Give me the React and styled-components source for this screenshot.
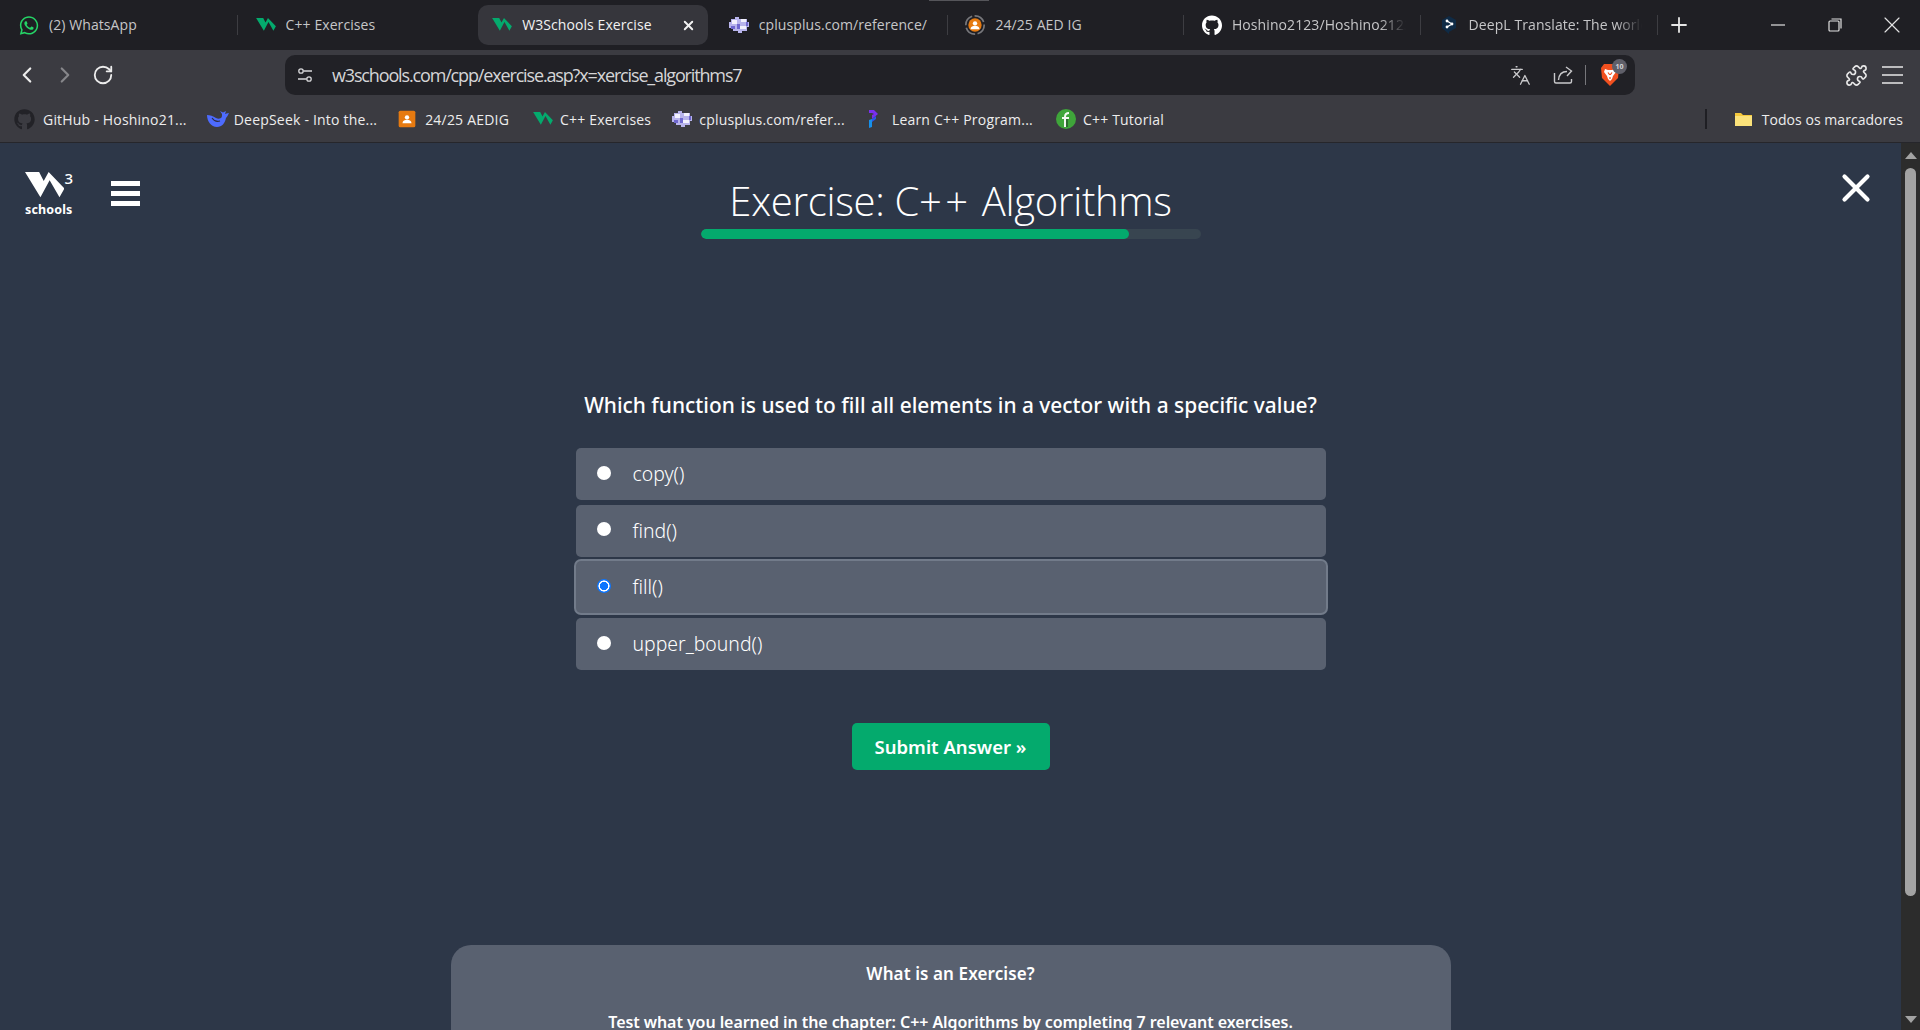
import React from "react";
import styled, { createGlobalStyle } from "styled-components";
import { FaGithub, FaWhatsapp } from "react-icons/fa";
import { ChevronLeft, ChevronRight, RotateCw, Languages, Puzzle, Plus, X } from "lucide-react";

const Global = createGlobalStyle`
  html, body { margin: 0; padding: 0; height: 100%; overflow: hidden; background: #2d3748; }
  * { box-sizing: border-box; }
`;

const ui = `"Open Sans", "Noto Sans", sans-serif`;
const pageFont = `"Noto Sans", "Open Sans", sans-serif`;

const Shell = styled.div`
  width: 1920px; height: 1030px; display: flex; flex-direction: column; overflow: hidden;
`;
const TabStrip = styled.div`
  position: relative; height: 50px; flex: none; background: #1f1f24; display: flex; padding-left: 1.5px;
  font-family: ${ui};
  &::before { content: ""; position: absolute; left: 929px; top: 0; width: 60px; height: 1px; background: #55555a; }
`;
const Tab = styled.div`
  position: relative; width: 236.6px; flex: none; padding: 5px 3.5px;
  &::after {
    content: ""; display: ${p => (p.$sep ? "block" : "none")};
    position: absolute; right: 0; top: 15px; width: 1px; height: 20px; background: #3d3d42;
  }
`;
const TabPill = styled.div`
  height: 40px; border-radius: 10px; display: flex; align-items: center; gap: 10px; padding: 0 12px 0 14px;
  background: ${p => (p.$active ? "#36363c" : "transparent")};
  color: ${p => (p.$active ? "#f2f2f2" : "#c6c6c8")};
`;
const TabTitle = styled.span`
  flex: 1; min-width: 0; white-space: nowrap; overflow: hidden; font-size: 14px; letter-spacing: 0.08px; margin-bottom: 2px;
  mask-image: ${p => (p.$fade ? "linear-gradient(90deg,#000 85%,transparent)" : "none")};
`;
const IconSlot = styled.span`
  width: 20px; height: 20px; flex: none; display: flex; align-items: center; justify-content: center;
`;
const NewTab = styled.div`
  width: 42px; display: flex; align-items: center; justify-content: center; color: #e6e6e6;
`;
const WindowControls = styled.div`
  margin-left: auto; display: flex; align-items: center; color: #e2e2e2; padding-right: 0;
`;
const WindowButton = styled.div`
  width: 57px; display: flex; justify-content: center; align-items: center;
`;
const Toolbar = styled.div`
  height: 50px; flex: none; background: #3b3b41; display: flex; align-items: center; padding: 0 17px 0 8px; color: #e8e8e8;
`;
const NavButton = styled.div`
  width: 38px; display: flex; justify-content: center; color: ${p => (p.$dim ? "#86868a" : "#ececec")};
`;
const AddressBar = styled.div`
  width: 1350px; height: 40px; margin-left: 163px; background: #212126; border-radius: 10px;
  display: flex; align-items: center; padding: 0 12px 0 12px; font-family: ${ui}; color: #d5d5d7;
`;
const Url = styled.span`
  margin-left: 19px; font-size: 18px; letter-spacing: -1.15px; white-space: nowrap; flex: 1;
`;
const AddressIcon = styled.span`
  display: flex; margin-left: ${p => p.$gap || 0}px; color: #c9c9cb;
`;
const VerticalRule = styled.span`
  width: 1px; height: 20px; background: #77777b; margin: 0 14px 0 12px;
`;
const BraveWrap = styled.span`
  position: relative; display: flex; margin-right: 3px;
`;
const CountBadge = styled.span`
  position: absolute; left: 12px; top: -4px; width: 15px; height: 15px; border-radius: 50%;
  background: #5f5f69; color: #d4d4d8; font: 700 7px/15px ${ui}; text-align: center;
`;
const ToolbarRight = styled.div`
  margin-left: auto; display: flex; align-items: center; gap: 14px;
`;
const BookmarkBar = styled.div`
  height: 43px; flex: none; background: #3b3b41; border-bottom: 1px solid #26262b; padding: 0 17px 4px 14px;
  display: flex; align-items: center; font-family: ${ui}; color: #ededed; font-size: 14px; letter-spacing: 0.2px;
`;
const Bookmark = styled.div`
  display: flex; align-items: center; gap: ${p => p.$gap || 8}px; margin-right: ${p => p.$end || 20}px; white-space: nowrap;
`;
const AllBookmarks = styled.div`
  margin-left: auto; display: flex; align-items: center; gap: 9px; white-space: nowrap; letter-spacing: 0.05px;
`;
const BarDivider = styled.span`
  width: 2px; height: 20px; background: #1f1f24; margin-right: 18px;
`;
const Viewport = styled.div`
  flex: 1; min-height: 0; display: flex;
`;
const Page = styled.main`
  flex: 1; min-width: 0; background: #2d3748; color: #fff; font-family: ${pageFont}; overflow: hidden; position: relative;
`;
const Header = styled.header`
  display: grid; grid-template-columns: 1fr 500px 1fr; padding-top: 33px;
`;
const LeftHead = styled.div`
  display: flex; align-items: flex-start; padding-left: 25px; margin-top: -4px;
`;
const Logo = styled.div`
  width: 48px; display: flex; flex-direction: column;
`;
const LogoTop = styled.div`
  display: flex; align-items: flex-start;
`;
const LogoThree = styled.span`
  font: 500 15px/12px ${pageFont};
`;
const LogoWord = styled.span`
  font: 700 12.5px/13px ${pageFont}; letter-spacing: 0.15px; margin-top: 5px;
`;
const Burger = styled.div`
  width: 29px; margin-left: 38px; margin-top: 9px; display: flex; flex-direction: column; gap: 5px;
`;
const BurgerBar = styled.span`
  height: 5px; background: #fff; display: block;
`;
const Center = styled.div`
  display: flex; flex-direction: column; align-items: center;
`;
const Title = styled.h1`
  margin: 0; font-size: 40px; font-weight: 300; line-height: 50px; white-space: nowrap; font-family: "Open Sans", sans-serif;
  letter-spacing: -0.3px;
`;
const TitlePlus = styled.span`
  letter-spacing: 3.5px;
`;
const ProgressTrack = styled.div`
  width: 500px; height: 10px; margin-top: 3px; border-radius: 5px; background: #384550; overflow: hidden;
`;
const ProgressFill = styled.div`
  height: 100%; background: #04aa6d; border-radius: 5px;
`;
const CloseCell = styled.div`
  display: flex; justify-content: flex-end; padding-right: 22px; margin-top: -11px;
`;
const Quiz = styled.section`
  display: flex; flex-direction: column; align-items: center; margin-top: 151px;
`;
const Question = styled.h2`
  margin: 0; font-size: 20.9px; line-height: 30px; font-weight: 500; white-space: nowrap;
`;
const Options = styled.div`
  width: 750px; margin-top: 28px; display: flex; flex-direction: column; gap: 4.7px;
`;
const Option = styled.div`
  height: 52px; border-radius: 5px; background: #596170; display: flex; align-items: center; padding-left: 21px;
  font-size: 19.4px; font-weight: 300; line-height: 26px;
  box-shadow: ${p => (p.$on ? "0 0 0 2px #727b8a" : "none")};
`;
const Radio = styled.span`
  width: 14px; height: 14px; border-radius: 50%; flex: none; margin: -3px 22px 0 0;
  background: ${p => (p.$on ? "radial-gradient(circle,#0b75ff 0 3.9px,#fff 4.4px 5.3px,#0b75ff 5.8px)" : "#fff")};
`;
const Submit = styled.button`
  width: 198px; height: 47px; margin-top: 53px; border: 0; border-radius: 5px; background: #04aa6d; color: #fff;
  font: 600 18.5px ${pageFont}; padding: 0; white-space: nowrap;
`;
const Card = styled.section`
  width: 1000px; margin-top: 175px; height: 200px; padding-top: 17px; border-radius: 20px; background: #596170;
  text-align: center; font-weight: 600; line-height: 24px;
`;
const CardHead = styled.div`
  margin-bottom: 24px; font-size: 17px; letter-spacing: 0.1px;
`;
const CardBody = styled.div`
  font-size: 16px; letter-spacing: -0.07px;
`;
const Scrollbar = styled.aside`
  width: 19px; flex: none; background: #2c2c2c; display: flex; flex-direction: column; align-items: center; padding: 9px 0 7px;
`;
const ArrowUp = styled.span`
  width: 0; height: 0; border-left: 6.5px solid transparent; border-right: 6.5px solid transparent; border-bottom: 7px solid #a3a3a3;
`;
const ArrowDown = styled.span`
  width: 0; height: 0; border-left: 6.5px solid transparent; border-right: 6.5px solid transparent; border-top: 7px solid #a3a3a3; margin-top: auto;
`;
const Thumb = styled.span`
  width: 11px; height: 728px; margin-top: 9px; border-radius: 6px; background: #a3a3a3;
`;

const W3 = ({ size = 20, color = "#04aa6d" }) => (
  <svg width={size} height={size * 0.66} viewBox="0 0 120 80" fill={color}>
    <path d="M0 0H43L57 27 72 0 120 50 105 77 75 25 47 77Z" />
  </svg>
);
const CPlus = () => (
  <svg width="20" height="16" viewBox="0 0 20 16">
    <path d="M2 2h4V0h4v2h8v3h2v5h-2v4h-5v2h-4v-2H4v-3H0V5h2z" fill="#b8b4ec" />
    <path d="M3 3h5v4H3zM12 2h5v3h-5zM11 9h6v3h-6z" fill="#f2f1fd" />
    <path d="M8 7h3v5H8zM2 9h4v3H2zM17 5h2v4h-2z" fill="#6f68cf" />
  </svg>
);
const Moodle = ({ ring }) => (
  <svg width={ring ? 24 : 20} height={ring ? 24 : 20} viewBox="0 0 24 24">
    {ring && <circle cx="12" cy="12" r="11" fill="none" stroke="#77777b" strokeWidth="2" strokeDasharray="14 3" />}
    {ring ? <circle cx="12" cy="12" r="8" fill="#e67a10" /> : <rect x="2" y="2" width="20" height="20" rx="2" fill="#e67a10" />}
    <circle cx="12" cy="10" r="2.6" fill="#fff" />
    <path d="M6.5 17c.4-3 2.8-4 5.5-4s5.1 1 5.5 4z" fill="#fff" />
  </svg>
);
const DeepL = () => (
  <svg width="18" height="20" viewBox="0 0 18 20">
    <path d="M9 1l7 4v8l-7 4v2l-3-2.5L2 13V5z" fill="#0f2b46" />
    <path d="M7 6l5 3-5 3" fill="none" stroke="#fff" strokeWidth="1.3" />
    <circle cx="7" cy="6" r="1.4" fill="#fff" /><circle cx="12" cy="9" r="1.4" fill="#fff" /><circle cx="7" cy="12" r="1.4" fill="#fff" />
  </svg>
);
const Whale = () => (
  <svg width="22" height="16" viewBox="0 0 22 16">
    <path d="M0 4c3 0 6 1 9 3 2 1 3 1 5 0 1-1 1-2 1-4l-2-3 3 1.5L19 0l-1 3c1 0 2-1 4-1-1 2-2 4-3 5-1 5-4 9-9 9C4 16 0 10 0 4z" fill="#4d6bfe" />
    <path d="M5 7c2 3 5 4 8 3" stroke="#2c2c40" strokeWidth="1.1" fill="none" />
  </svg>
);
const Programiz = () => (
  <svg width="12" height="20" viewBox="0 0 12 20">
    <path d="M2 1h5l4 4-6 5V6l2-1-2-1H2z" fill="#7a2ff0" />
    <path d="M2 11l3-1v8l-3 1z" fill="#1790ea" />
    <path d="M5 10l4-3v3l-4 3z" fill="#2b55e8" />
  </svg>
);
const GreenF = () => (
  <svg width="20" height="20" viewBox="0 0 20 20">
    <circle cx="10" cy="10" r="10" fill="#3fa53a" />
    <path d="M9 18V8c0-3 1.5-4 4-4M6 9h7" fill="none" stroke="#f4f7f2" strokeWidth="2" />
    <path d="M11 10v8" stroke="#26452a" strokeWidth="1.2" />
  </svg>
);
const Brave = () => (
  <svg width="20" height="24" viewBox="0 0 20 24">
    <path d="M4 1h12l3 4-1 10-8 8-8-8L1 5z" fill="#f1501f" />
    <path d="M5 6l3 1h4l3-1 1 3-3 4-1 3-2 2-2-2-1-3-3-4z" fill="#fff" />
    <path d="M8 9.5l1.5 2h1L12 9.5M10 14v2" stroke="#f1501f" strokeWidth="1.2" fill="none" />
  </svg>
);
const TuneIcon = () => (
  <svg width="16" height="16" viewBox="0 0 16 16" fill="none" stroke="#d8d8da" strokeWidth="1.3">
    <circle cx="4" cy="4" r="2.2" /><path d="M6.5 4H15M1 12h8.5" /><circle cx="12" cy="12" r="2.2" />
  </svg>
);
const ShareIcon = () => (
  <svg width="20" height="20" viewBox="0 0 20 20" fill="none" stroke="#c9c9cb" strokeWidth="1.4">
    <path d="M1.5 8v8.5a1.5 1.5 0 0 0 1.5 1.5h14a1.5 1.5 0 0 0 1.5-1.5V14" />
    <path d="M5.5 15C6 9 9.500 6.500 14 6.500M13 2l5.500 4L14 11" />
  </svg>
);
const MenuLines = () => (
  <svg width="21" height="18" viewBox="0 0 21 18" stroke="#e8e8e8" strokeWidth="1.7"><path d="M0 1h21M0 9h21M0 17h21" /></svg>
);
const Restore = () => (
  <svg width="14" height="14" viewBox="0 0 14 14" fill="none" stroke="#e2e2e2" strokeWidth="1.2">
    <rect x="1" y="3" width="10" height="10" rx="1" /><path d="M3.5 1H13v9.5" />
  </svg>
);
const Folder = () => (
  <svg width="19" height="18" viewBox="0 0 19 18">
    <path d="M1 3h6l2 2h9v11H1z" fill="#f5c83c" /><path d="M1 6h17v10H1z" fill="#fbe27a" />
  </svg>
);

const tabs = [
  { t: "(2) WhatsApp", i: <FaWhatsapp size={21} color="#25d366" />, sep: true },
  { t: "C++ Exercises", i: <W3 /> },
  { t: "W3Schools Exercise", i: <W3 />, active: true },
  { t: "cplusplus.com/reference/", i: <CPlus />, sep: true },
  { t: "24/25 AED IG", i: <Moodle ring />, sep: true },
  { t: "Hoshino2123/Hoshino2123", i: <FaGithub size={21} color="#fff" />, sep: true, fade: true },
  { t: "DeepL Translate: The world's", i: <DeepL />, sep: true, fade: true },
];
const bookmarks = [
  { t: "GitHub - Hoshino21...", i: <FaGithub size={21} color="#222227" />, end: 20 },
  { t: "DeepSeek - Into the...", i: <Whale />, end: 20, gap: 5 },
  { t: "24/25 AEDIG", i: <Moodle />, end: 24 },
  { t: "C++ Exercises", i: <W3 />, end: 21, gap: 7 },
  { t: "cplusplus.com/refer...", i: <CPlus />, end: 22, gap: 7 },
  { t: "Learn C++ Program...", i: <Programiz />, end: 23, gap: 13 },
  { t: "C++ Tutorial", i: <GreenF />, gap: 7 },
];
const options = ["copy()", "find()", "fill()", "upper_bound()"];

export default function App() {
  return (
    <Shell>
      <Global />
      <TabStrip>
        {tabs.map(x => (
          <Tab key={x.t} $sep={x.sep}>
            <TabPill $active={x.active}>
              <IconSlot>{x.i}</IconSlot>
              <TabTitle $fade={x.fade}>{x.t}</TabTitle>
              {x.active && <X size={15} strokeWidth={3} color="#f2f2f2" />}
            </TabPill>
          </Tab>
        ))}
        <NewTab><Plus size={24} strokeWidth={1.8} /></NewTab>
        <WindowControls>
          <WindowButton><svg width="14" height="2"><path d="M0 1h14" stroke="#e2e2e2" strokeWidth="1.2" /></svg></WindowButton>
          <WindowButton><Restore /></WindowButton>
          <WindowButton><X size={28} strokeWidth={1} /></WindowButton>
        </WindowControls>
      </TabStrip>
      <Toolbar>
        <NavButton><ChevronLeft size={26} strokeWidth={2} /></NavButton>
        <NavButton $dim><ChevronRight size={26} strokeWidth={2} /></NavButton>
        <NavButton><RotateCw size={22} strokeWidth={2} /></NavButton>
        <AddressBar>
          <TuneIcon />
          <Url>w3schools.com/cpp/exercise.asp?x=xercise_algorithms7</Url>
          <AddressIcon><Languages size={21} strokeWidth={1.5} /></AddressIcon>
          <AddressIcon $gap={22}><ShareIcon /></AddressIcon>
          <VerticalRule />
          <BraveWrap><Brave /><CountBadge>10</CountBadge></BraveWrap>
        </AddressBar>
        <ToolbarRight>
          <Puzzle size={23} strokeWidth={1.7} />
          <MenuLines />
        </ToolbarRight>
      </Toolbar>
      <BookmarkBar>
        {bookmarks.map(b => (
          <Bookmark key={b.t} $gap={b.gap} $end={b.end}>{b.i}<span>{b.t}</span></Bookmark>
        ))}
        <AllBookmarks><BarDivider /><Folder /><span>Todos os marcadores</span></AllBookmarks>
      </BookmarkBar>
      <Viewport>
        <Page>
          <Header>
            <LeftHead>
              <Logo>
                <LogoTop><W3 size={40} color="#fff" /><LogoThree>3</LogoThree></LogoTop>
                <LogoWord>schools</LogoWord>
              </Logo>
              <Burger><BurgerBar /><BurgerBar /><BurgerBar /></Burger>
            </LeftHead>
            <Center>
              <Title>Exercise: C<TitlePlus>++</TitlePlus> Algorithms</Title>
              <ProgressTrack><ProgressFill style={{ width: `${(6 / 7) * 100}%` }} /></ProgressTrack>
            </Center>
            <CloseCell><X size={46} strokeWidth={2.2} color="#fff" /></CloseCell>
          </Header>
          <Quiz>
            <Question>Which function is used to fill all elements in a vector with a specific value?</Question>
            <Options>
              {options.map(o => (
                <Option key={o} $on={o === "fill()"}><Radio $on={o === "fill()"} /><span>{o}</span></Option>
              ))}
            </Options>
            <Submit>Submit Answer »</Submit>
            <Card>
              <CardHead>What is an Exercise?</CardHead>
              <CardBody>Test what you learned in the chapter: C++ Algorithms by completing 7 relevant exercises.</CardBody>
            </Card>
          </Quiz>
        </Page>
        <Scrollbar><ArrowUp /><Thumb /><ArrowDown /></Scrollbar>
      </Viewport>
    </Shell>
  );
}
